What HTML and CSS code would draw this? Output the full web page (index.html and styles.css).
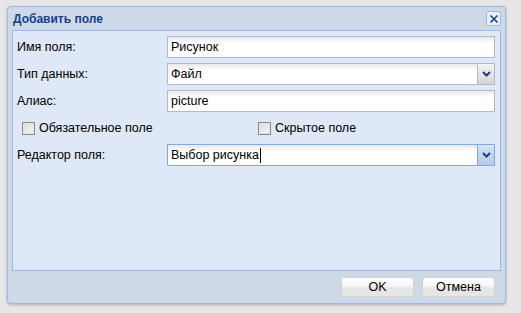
FILE: index.html
```html
<!DOCTYPE html>
<html>
<head>
<meta charset="utf-8">
<link rel="stylesheet" href="styles.css">
</head>
<body>
<div class="window">
  <div class="header">
    <span class="title">Добавить поле</span>
    <span class="tool-close">
      <svg width="10" height="10" viewBox="0 0 10 10"><path d="M1.5 1.5 L8.5 8.5 M8.5 1.5 L1.5 8.5" stroke="#1a3f8a" stroke-width="1.6" fill="none"/></svg>
    </span>
  </div>
  <div class="body">
    <div class="form">
      <label class="lbl">Имя поля:</label>
      <div class="field"><span class="val">Рисунок</span></div>

      <label class="lbl">Тип данных:</label>
      <div class="field combo"><span class="val">Файл</span><span class="trigger"><svg width="9" height="6" viewBox="0 0 9 6"><path d="M1 1 L4.5 4.5 L8 1" stroke="#1e3d7c" stroke-width="2" fill="none"/></svg></span></div>

      <label class="lbl">Алиас:</label>
      <div class="field"><span class="val">picture</span></div>

      <div class="checks">
        <label class="chk"><span class="box"></span>Обязательное поле</label>
        <label class="chk"><span class="box"></span>Скрытое поле</label>
      </div>

      <label class="lbl">Редактор поля:</label>
      <div class="field combo focus"><span class="val">Выбор рисунка<span class="caret"></span></span><span class="trigger"><svg width="9" height="6" viewBox="0 0 9 6"><path d="M1 1 L4.5 4.5 L8 1" stroke="#1e3d7c" stroke-width="2" fill="none"/></svg></span></div>
    </div>
  </div>
  <div class="footer">
    <button class="btn">OK</button>
    <button class="btn">Отмена</button>
  </div>
</div>
</body>
</html>
```
FILE: styles.css
```css
html, body {
  margin: 0;
  padding: 0;
}
body {
  background: #e7e7e7;
  width: 521px;
  height: 313px;
  overflow: hidden;
  font-family: "Liberation Sans", Arial, sans-serif;
  font-size: 12.5px;
  color: #000;
}
.window {
  margin: 6px 0 0 7px;
  width: 497px;
  height: 296px;
  border: 1px solid #99bbe8;
  border-radius: 4px;
  background: #ced9e7;
  box-shadow: 0 1px 3px rgba(0,0,0,0.25);
  display: flex;
  flex-direction: column;
}
.header {
  height: 23px;
  display: flex;
  align-items: center;
  justify-content: space-between;
  padding: 0 4px 0 5px;
}
.title {
  font-weight: bold;
  color: #15428b;
  font-size: 12px;
  font-family: "Liberation Sans", Arial, sans-serif;
}
.tool-close {
  width: 13px;
  height: 13px;
  border: 1px solid #99bbe8;
  border-radius: 2px;
  background: #e9f0fa;
  display: flex;
  align-items: center;
  justify-content: center;
}
.body {
  margin: 0 4px;
  border: 1px solid #99bbe8;
  background: #dfe8f6;
  padding: 5px 5px 0 4px;
  box-sizing: border-box;
  height: 241px;
}
.form {
  display: grid;
  grid-template-columns: 150px 1fr;
  grid-auto-rows: 22px;
  row-gap: 5px;
}
.lbl {
  display: flex;
  align-items: center;
}
.field {
  display: flex;
  align-items: center;
  border: 1px solid #b5b8c8;
  background: linear-gradient(to bottom, #e8e8e8 0, #ffffff 6px, #ffffff 100%);
  padding-left: 3px;
}
.field .val {
  flex: 1;
  display: flex;
  align-items: center;
}
.field.focus {
  border-color: #7eadd9;
}
.caret {
  display: inline-block;
  width: 1px;
  height: 15px;
  background: #000;
  margin-left: 1px;
}
.trigger {
  width: 16px;
  align-self: stretch;
  border-left: 1px solid #b5b8c8;
  background: linear-gradient(to bottom, #f4f4f4 0, #e0e0e0 60%, #d4d4d4 100%);
  display: flex;
  align-items: center;
  justify-content: center;
}
.focus .trigger {
  border-left-color: #7eadd9;
  background: linear-gradient(to bottom, #d6e4f4 0, #bfd3ec 60%, #b4cbe7 100%);
}
.checks {
  grid-column: 1 / 3;
  display: grid;
  grid-template-columns: 236px 1fr;
  align-items: center;
}
.chk {
  display: flex;
  align-items: center;
  padding-left: 5px;
}
.box {
  width: 11px;
  height: 11px;
  border: 1px solid #8a8a8a;
  background: linear-gradient(135deg, #dcdcdc 0, #f6f6f6 100%);
  margin-right: 4px;
  box-shadow: inset 0 0 0 1px #e4e4e4;
}
.footer {
  flex: 1;
  display: flex;
  justify-content: flex-end;
  align-items: flex-start;
  gap: 8px;
  padding: 6px 10px 0 0;
}
.btn {
  width: 73px;
  height: 20px;
  border: 1px solid #d3d3d3;
  border-radius: 3px;
  background: linear-gradient(to bottom, #ffffff 0, #f5f5f5 45%, #e6e6e6 55%, #e6e6e6 100%);
  font-family: "Liberation Sans", Arial, sans-serif;
  font-size: 12.5px;
  color: #000;
  padding: 0;
}
```
